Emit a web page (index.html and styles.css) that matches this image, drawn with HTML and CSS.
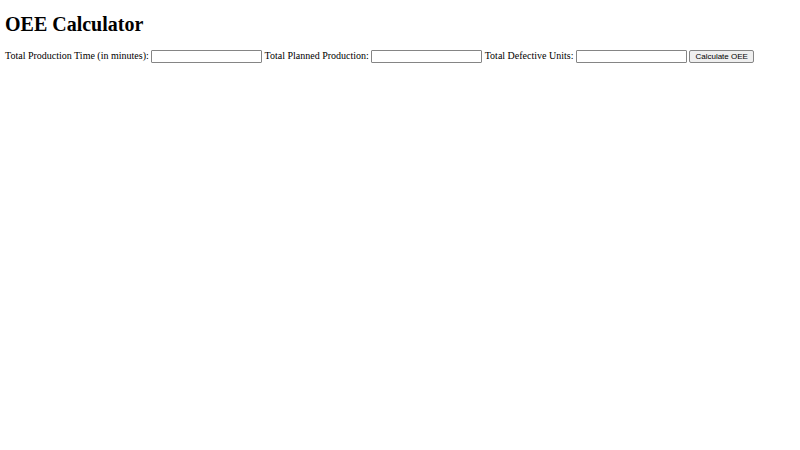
FILE: index.html
```html
<!DOCTYPE html>
<html lang="en">
  <head>
    <meta charset="UTF-8" />
    <meta name="viewport" content="width=device-width, initial-scale=1.0" />
    <title>OEE Calculator</title>
    <link rel="stylesheet" href="styles.css">
  </head>
  <body>
    <h1>OEE Calculator</h1>
    <form id="oeeForm" class="oee-form">
      <label for="productionTime">Total Production Time (in minutes):</label>
      <input type="number" id="productionTime" name="productionTime" required />
      <label for="plannedProduction">Total Planned Production:</label>
      <input type="number" id="plannedProduction" name="plannedProduction" required />
      <label for="defectiveUnits">Total Defective Units:</label>
      <input type="number" id="defectiveUnits" name="defectiveUnits" required />
      <button type="button" id="calculate">Calculate OEE</button>
    </form>
  </body>
</html>
```

FILE: styles.css
```css
body {
  margin: 0;
  padding: 12px 5px;
  font-family: "Liberation Serif", "Times New Roman", serif;
  font-size: 10px;
  color: #000;
  background-color: #fff;
}
h1 {
  margin: 0 0 14px;
  font-size: 20px;
  line-height: 24px;
}
.oee-form {
  line-height: 12px;
}
input[type="number"] {
  box-sizing: border-box;
  width: 111px;
  height: 13px;
  margin: 0;
  padding: 1px;
  border: 1px solid #858585;
  border-radius: 1px;
  font-size: 8px;
}
#calculate {
  box-sizing: border-box;
  height: 13px;
  margin: 0;
  padding: 0 5px;
  border: 1px solid #858585;
  border-radius: 2px;
  background-color: #efefef;
  font-family: "Liberation Sans", Arial, sans-serif;
  font-size: 8px;
  line-height: 11px;
  color: #000;
}
```
